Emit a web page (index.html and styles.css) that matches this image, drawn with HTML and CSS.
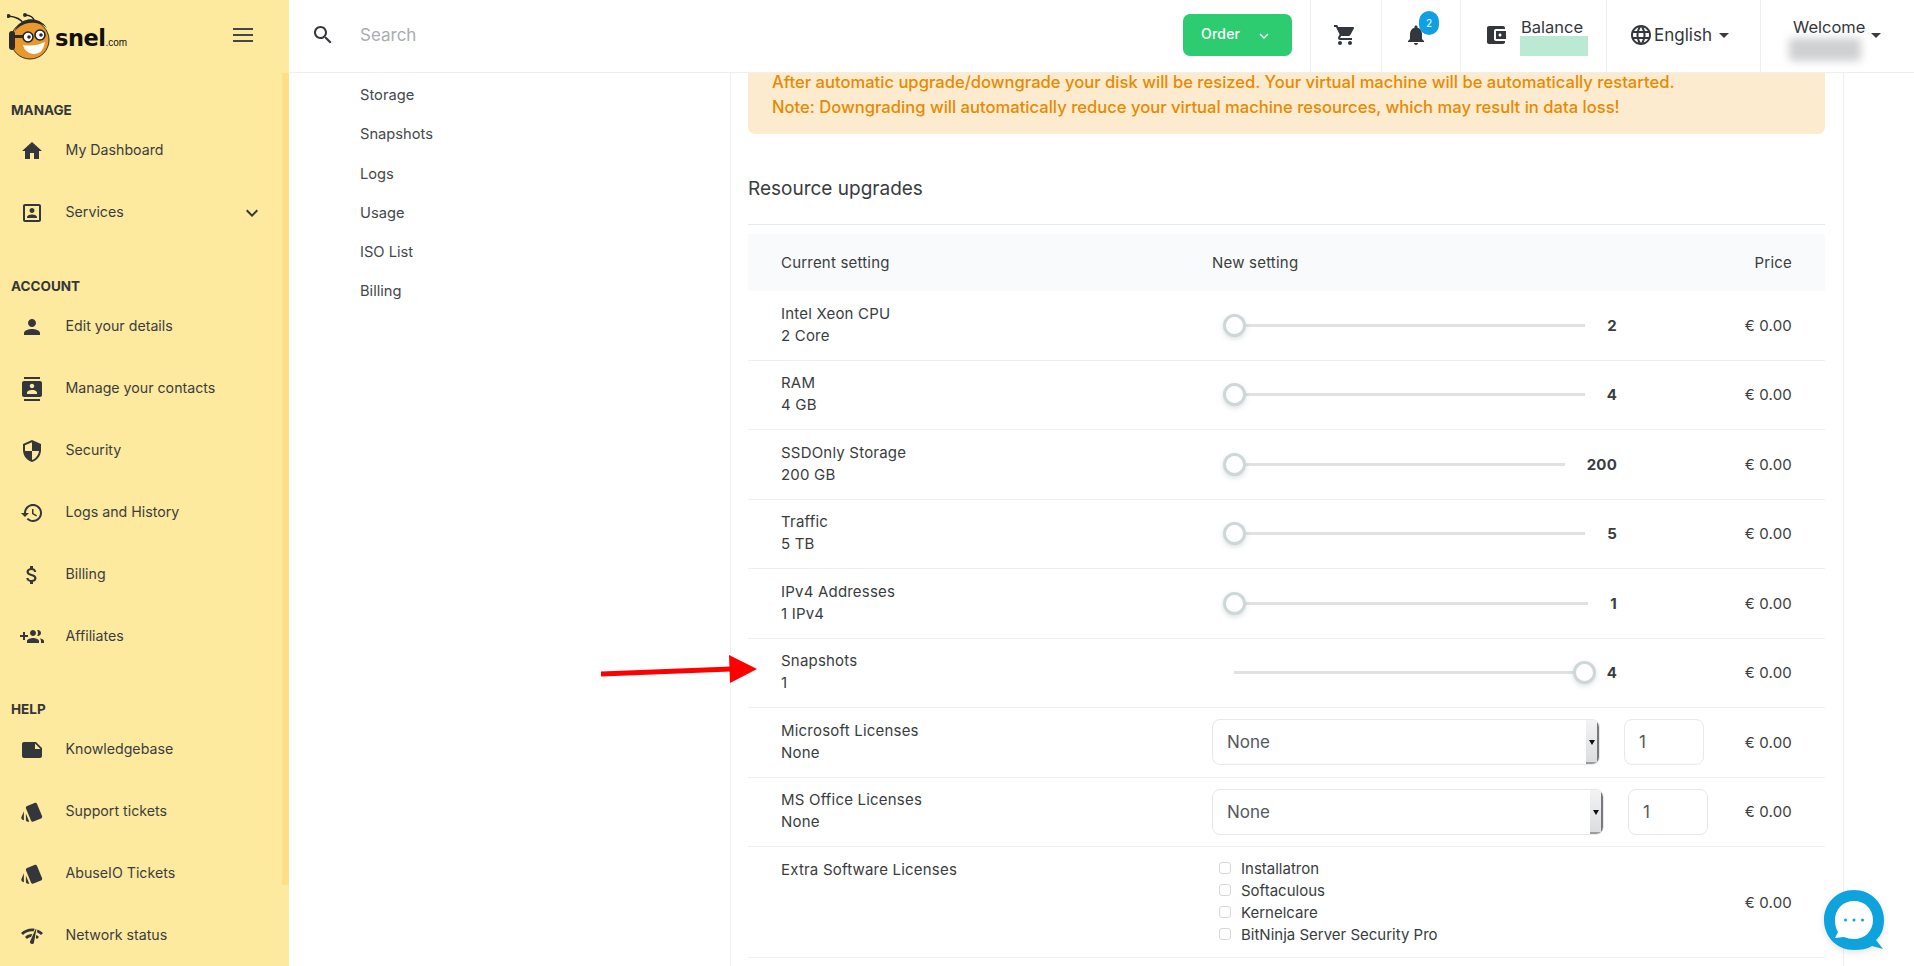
FILE: index.html
```html
<!DOCTYPE html>
<html lang="en">
<head>
<meta charset="utf-8">
<title>Snel.com</title>
<link rel="stylesheet" href="styles.css">
</head>
<body>
<svg class="defs" aria-hidden="true">
  <symbol id="i-home" viewBox="0 0 24 24"><path d="M10 20v-6h4v6h5v-8h3L12 3 2 12h3v8z"/></symbol>
  <symbol id="i-box" viewBox="0 0 24 24"><path d="M19 5v14H5V5h14m0-2H5c-1.11 0-2 .9-2 2v14c0 1.1.89 2 2 2h14c1.1 0 2-.9 2-2V5c0-1.1-.9-2-2-2z"/><path d="M12 12c1.4 0 2.5-1.1 2.5-2.5S13.4 7 12 7 9.5 8.1 9.5 9.5 10.6 12 12 12zm5 5v-1c0-1.7-3.3-2.5-5-2.5S7 14.3 7 16v1h10z"/></symbol>
  <symbol id="i-person" viewBox="0 0 24 24"><path d="M12 12c2.21 0 4-1.79 4-4s-1.79-4-4-4-4 1.79-4 4 1.79 4 4 4zm0 2c-2.67 0-8 1.34-8 4v2h16v-2c0-2.66-5.33-4-8-4z"/></symbol>
  <symbol id="i-contacts" viewBox="0 0 24 24"><path d="M20 0H4v2h16V0zM4 24h16v-2H4v2zM20 4H4c-1.1 0-2 .9-2 2v12c0 1.1.9 2 2 2h16c1.1 0 2-.9 2-2V6c0-1.1-.9-2-2-2zm-8 2.75c1.24 0 2.25 1.01 2.25 2.25s-1.01 2.25-2.25 2.25S9.75 10.24 9.75 9 10.76 6.75 12 6.75zM17 17H7v-1.5c0-1.67 3.33-2.5 5-2.5s5 .83 5 2.5V17z"/></symbol>
  <symbol id="i-shield" viewBox="0 0 24 24"><path d="M12 1L3 5v6c0 5.55 3.84 10.74 9 12 5.16-1.26 9-6.45 9-12V5l-9-4zm0 10.99h7c-.53 4.12-3.28 7.79-7 8.94V12H5V6.3l7-3.11v8.8z"/></symbol>
  <symbol id="i-history" viewBox="0 0 24 24"><path d="M13 3c-4.97 0-9 4.03-9 9H1l3.89 3.89.07.14L9 12H6c0-3.87 3.13-7 7-7s7 3.13 7 7-3.13 7-7 7c-1.93 0-3.68-.79-4.94-2.06l-1.42 1.42C8.27 19.99 10.51 21 13 21c4.97 0 9-4.03 9-9s-4.03-9-9-9zm-1 5v5l4.28 2.54.72-1.21-3.5-2.08V8H12z"/></symbol>
  <symbol id="i-money" viewBox="0 0 24 24"><path d="M11.8 10.9c-2.27-.59-3-1.2-3-2.15 0-1.09 1.01-1.85 2.7-1.85 1.78 0 2.44.85 2.5 2.1h2.21c-.07-1.72-1.12-3.3-3.21-3.81V3h-3v2.16c-1.94.42-3.5 1.68-3.5 3.61 0 2.31 1.91 3.46 4.7 4.13 2.5.6 3 1.48 3 2.41 0 .69-.49 1.79-2.7 1.79-2.06 0-2.87-.92-2.98-2.1h-2.2c.12 2.19 1.76 3.42 3.68 3.83V21h3v-2.15c1.95-.37 3.5-1.5 3.5-3.55 0-2.84-2.43-3.81-4.7-4.4z"/></symbol>
  <symbol id="i-group" viewBox="0 0 24 24"><path d="M8 10H5V7H3v3H0v2h3v3h2v-3h3v-2zm10 1c1.66 0 2.99-1.34 2.99-3S19.66 5 18 5c-.32 0-.63.05-.91.14.57.81.9 1.79.9 2.86s-.34 2.04-.9 2.86c.28.09.59.14.91.14zm-5 0c1.66 0 2.99-1.34 2.99-3S14.66 5 13 5s-3 1.34-3 3 1.34 3 3 3zm6.62 2.16c.83.73 1.38 1.66 1.38 2.84v2h3v-2c0-1.54-2.37-2.49-4.38-2.84zM13 13c-2 0-6 1-6 3v2h12v-2c0-2-4-3-6-3z"/></symbol>
  <symbol id="i-note" viewBox="0 0 24 24"><path d="M22 10l-6-6H4c-1.1 0-2 .9-2 2v12.01c0 1.1.9 1.99 2 1.99l16-.01c1.1 0 2-.89 2-1.99v-8zm-7-4.5l5.5 5.5H15V5.5z"/></symbol>
  <symbol id="i-style" viewBox="0 0 24 24"><path d="M2.53 19.65l1.34.56v-9.03l-2.43 5.86c-.41 1.02.08 2.19 1.09 2.61zm19.5-3.7L17.07 3.98c-.31-.75-1.04-1.21-1.81-1.23-.26 0-.53.04-.79.15L7.1 5.95c-.75.31-1.21 1.03-1.23 1.8-.01.27.04.54.15.8l4.96 11.97c.31.76 1.05 1.22 1.83 1.23.26 0 .52-.05.77-.15l7.36-3.05c1.02-.42 1.51-1.59 1.09-2.6zM5.88 19.75c0 1.1.9 2 2 2h1.45l-3.45-8.34v6.34z"/></symbol>
  <symbol id="i-network" viewBox="0 0 24 24"><path d="M15.9 5c-.17 0-.32.09-.41.23l-.07.15-5.18 11.65c-.16.29-.26.61-.26.96 0 1.11.9 2.01 2.01 2.01.96 0 1.77-.68 1.96-1.59l.01-.03L16.4 5.5c0-.28-.22-.5-.5-.5zM1 9l2 2c2.88-2.88 6.79-4.08 10.53-3.62l1.19-2.68C9.89 3.84 4.74 5.27 1 9zm20 2l2-2c-1.64-1.64-3.54-2.82-5.57-3.57l-.53 2.82c1.5.62 2.9 1.53 4.1 2.75zm-4 4l2-2c-.8-.8-1.7-1.42-2.66-1.89l-.55 2.92c.42.27.83.59 1.21.97zM5 13l2 2c1.13-1.13 2.56-1.79 4.03-2l1.28-2.88c-2.63-.08-5.3.87-7.31 2.88z"/></symbol>
  <symbol id="i-chev" viewBox="0 0 24 24"><path d="M7.41 8.59L12 13.17l4.59-4.58L18 10l-6 6-6-6z"/></symbol>
</svg>

<div class="app">
  <aside class="sidebar">
    <div class="brand">
      <svg class="bee" viewBox="0 0 50 50" aria-hidden="true">
        <path d="M17 12 Q13 5 1 4" class="bee-ant"/><path d="M28 10 Q26 3 18 3" class="bee-ant"/>
        <circle cx="1.500" cy="4" r="2" class="bee-dark"/><circle cx="18" cy="3" r="2" class="bee-dark"/>
        <circle cx="23" cy="28" r="19" class="bee-head"/>
        <path d="M7 21 A18 18 0 0 1 40 16 L36 13 A22 20 0 0 0 5 24 Z" class="bee-dark"/>
        <rect x="2" y="19" width="6" height="19" rx="3" class="bee-dark"/>
        <rect x="7" y="23" width="10" height="3" class="bee-dark"/>
        <circle cx="21" cy="25" r="5" class="bee-eye"/><circle cx="33" cy="23" r="5" class="bee-eye"/>
        <circle cx="22" cy="25" r="1.800" class="bee-dark"/><circle cx="34" cy="23" r="1.800" class="bee-dark"/>
        <path d="M16 33 Q28 35 38 30 Q36 43 26 42 Q18 41 16 33 Z" class="bee-smile"/>
      </svg>
      <div class="wordmark">snel<span class="wordmark-com">.com</span></div>
      <div class="burger"><span></span><span></span><span></span></div>
    </div>
    <nav class="menu">
      <h4 class="menu-title">MANAGE</h4>
      <a class="menu-item"><svg class="icon"><use href="#i-home"/></svg>My Dashboard</a>
      <a class="menu-item"><svg class="icon"><use href="#i-box"/></svg>Services<svg class="icon menu-chev"><use href="#i-chev"/></svg></a>
      <h4 class="menu-title menu-title-gap">ACCOUNT</h4>
      <a class="menu-item"><svg class="icon"><use href="#i-person"/></svg>Edit your details</a>
      <a class="menu-item"><svg class="icon"><use href="#i-contacts"/></svg>Manage your contacts</a>
      <a class="menu-item"><svg class="icon"><use href="#i-shield"/></svg>Security</a>
      <a class="menu-item"><svg class="icon"><use href="#i-history"/></svg>Logs and History</a>
      <a class="menu-item"><svg class="icon"><use href="#i-money"/></svg>Billing</a>
      <a class="menu-item"><svg class="icon"><use href="#i-group"/></svg>Affiliates</a>
      <h4 class="menu-title menu-title-gap">HELP</h4>
      <a class="menu-item"><svg class="icon"><use href="#i-note"/></svg>Knowledgebase</a>
      <a class="menu-item"><svg class="icon"><use href="#i-style"/></svg>Support tickets</a>
      <a class="menu-item"><svg class="icon"><use href="#i-style"/></svg>AbuseIO Tickets</a>
      <a class="menu-item"><svg class="icon"><use href="#i-network"/></svg>Network status</a>
    </nav>
    <div class="sidebar-scroll"></div>
  </aside>

  <div class="main">
    <header class="topbar">
      <div class="search">
        <svg class="icon" viewBox="0 0 24 24"><path d="M15.5 14h-.79l-.28-.27C15.41 12.59 16 11.11 16 9.5 16 5.91 13.09 3 9.5 3S3 5.91 3 9.5 5.91 16 9.5 16c1.61 0 3.09-.59 4.23-1.57l.27.28v.79l5 4.99L20.49 19l-4.99-5zm-6 0C7.01 14 5 11.99 5 9.5S7.01 5 9.5 5 14 7.01 14 9.5 11.99 14 9.5 14z"/></svg>
        <span class="search-text">Search</span>
      </div>
      <button class="order">Order<svg class="order-chev"><use href="#i-chev"/></svg></button>
      <div class="cell cell-cart">
        <svg class="icon" viewBox="0 0 24 24"><path d="M7 18c-1.100 0-1.990.9-1.990 2S5.900 22 7 22s2-.9 2-2-.9-2-2-2zM1 2v2h2l3.600 7.590-1.350 2.450c-.16.28-.25.61-.25.96 0 1.100.9 2 2 2h12v-2H7.420c-.14 0-.25-.11-.25-.25l.03-.12.9-1.630h7.450c.75 0 1.410-.41 1.750-1.030l3.580-6.490c.08-.14.12-.31.12-.48 0-.55-.45-1-1-1H5.210l-.94-2H1zm16 16c-1.100 0-1.990.9-1.990 2s.89 2 1.990 2 2-.9 2-2-.9-2-2-2z"/></svg>
      </div>
      <div class="cell cell-bell">
        <svg class="icon" viewBox="0 0 24 24"><path d="M12 22c1.100 0 2-.9 2-2h-4c0 1.100.89 2 2 2zm6-6v-5c0-3.070-1.640-5.640-4.500-6.320V4c0-.83-.67-1.500-1.500-1.500s-1.500.67-1.500 1.500v.68C7.630 5.360 6 7.920 6 11v5l-2 2v1h16v-1l-2-2z"/></svg>
        <span class="badge">2</span>
      </div>
      <div class="cell cell-balance">
        <svg class="icon" viewBox="0 0 24 24"><path d="M21 18v1c0 1.100-.9 2-2 2H5c-1.110 0-2-.9-2-2V5c0-1.100.89-2 2-2h14c1.100 0 2 .9 2 2v1h-9c-1.110 0-2 .9-2 2v8c0 1.100.89 2 2 2h9zm-9-2h10V8H12v8zm4-2.500c-.83 0-1.500-.67-1.500-1.500s.67-1.500 1.500-1.500 1.500.67 1.500 1.500-.67 1.500-1.500 1.500z"/></svg>
        <div class="stack">
          <span class="stack-label">Balance</span>
          <span class="redact-green"></span>
        </div>
      </div>
      <div class="cell cell-lang">
        <svg class="icon" viewBox="0 0 24 24"><path d="M11.990 2C6.470 2 2 6.480 2 12s4.470 10 9.990 10C17.520 22 22 17.520 22 12S17.520 2 11.990 2zm6.930 6h-2.950c-.32-1.250-.78-2.450-1.380-3.560 1.840.63 3.370 1.910 4.330 3.560zM12 4.040c.83 1.200 1.480 2.530 1.910 3.960h-3.820c.43-1.430 1.080-2.760 1.910-3.960zM4.260 14C4.100 13.360 4 12.690 4 12s.1-1.360.26-2h3.380c-.08.66-.14 1.320-.14 2 0 .68.06 1.340.14 2H4.260zm.82 2h2.950c.32 1.250.78 2.450 1.380 3.560-1.840-.63-3.370-1.900-4.330-3.560zm2.950-8H5.080c.96-1.660 2.490-2.930 4.330-3.560C8.810 5.550 8.350 6.750 8.030 8zM12 19.960c-.83-1.200-1.480-2.530-1.910-3.960h3.820c-.43 1.430-1.080 2.760-1.910 3.960zM14.340 14H9.660c-.09-.66-.16-1.320-.16-2 0-.68.07-1.350.16-2h4.680c.09.65.16 1.320.16 2 0 .68-.07 1.340-.16 2zm.25 5.560c.6-1.110 1.060-2.310 1.380-3.560h2.950c-.96 1.650-2.490 2.930-4.330 3.560zM16.360 14c.08-.66.14-1.320.14-2 0-.68-.06-1.340-.14-2h3.380c.16.64.26 1.310.26 2s-.1 1.360-.26 2h-3.380z"/></svg>
        <span class="lang-text">English</span>
        <span class="caret"></span>
      </div>
      <div class="cell cell-user">
        <div class="stack stack-user">
          <span class="stack-label">Welcome</span>
          <span class="redact-grey"></span>
        </div>
        <span class="caret"></span>
      </div>
    </header>

    <div class="content">
      <ul class="subnav">
        <li>Storage</li>
        <li>Snapshots</li>
        <li>Logs</li>
        <li>Usage</li>
        <li>ISO List</li>
        <li>Billing</li>
      </ul>

      <section class="panel">
        <div class="alert">
          <p>After automatic upgrade/downgrade your disk will be resized. Your virtual machine will be automatically restarted.</p>
          <p>Note: Downgrading will automatically reduce your virtual machine resources, which may result in data loss!</p>
        </div>
        <h3 class="section-title">Resource upgrades</h3>

        <div class="table">
          <div class="row row-head">
            <div>Current setting</div>
            <div>New setting</div>
            <div class="price">Price</div>
          </div>

          <div class="row">
            <div class="name"><div>Intel Xeon CPU</div><div>2 Core</div></div>
            <div class="slider"><div class="track"><i class="thumb"></i></div><b class="value">2</b></div>
            <div class="price">€ 0.00</div>
          </div>
          <div class="row">
            <div class="name"><div>RAM</div><div>4 GB</div></div>
            <div class="slider"><div class="track"><i class="thumb"></i></div><b class="value">4</b></div>
            <div class="price">€ 0.00</div>
          </div>
          <div class="row">
            <div class="name"><div>SSDOnly Storage</div><div>200 GB</div></div>
            <div class="slider"><div class="track"><i class="thumb"></i></div><b class="value">200</b></div>
            <div class="price">€ 0.00</div>
          </div>
          <div class="row">
            <div class="name"><div>Traffic</div><div>5 TB</div></div>
            <div class="slider"><div class="track"><i class="thumb"></i></div><b class="value">5</b></div>
            <div class="price">€ 0.00</div>
          </div>
          <div class="row">
            <div class="name"><div>IPv4 Addresses</div><div>1 IPv4</div></div>
            <div class="slider"><div class="track"><i class="thumb"></i></div><b class="value">1</b></div>
            <div class="price">€ 0.00</div>
          </div>
          <div class="row">
            <div class="name"><div>Snapshots</div><div>1</div></div>
            <div class="slider slider-max"><div class="track"><i class="thumb"></i></div><b class="value">4</b></div>
            <div class="price">€ 0.00</div>
          </div>
          <div class="row">
            <div class="name"><div>Microsoft Licenses</div><div>None</div></div>
            <div class="license"><div class="select">None<span class="select-cap"></span></div><div class="qty">1</div></div>
            <div class="price">€ 0.00</div>
          </div>
          <div class="row">
            <div class="name"><div>MS Office Licenses</div><div>None</div></div>
            <div class="license license-wide"><div class="select">None<span class="select-cap"></span></div><div class="qty">1</div></div>
            <div class="price">€ 0.00</div>
          </div>
          <div class="row row-tall">
            <div class="name"><div>Extra Software Licenses</div></div>
            <ul class="checks">
              <li><span class="check"></span>Installatron</li>
              <li><span class="check"></span>Softaculous</li>
              <li><span class="check"></span>Kernelcare</li>
              <li><span class="check"></span>BitNinja Server Security Pro</li>
            </ul>
            <div class="price">€ 0.00</div>
          </div>
        </div>
      </section>
    </div>
  </div>
</div>

<svg class="arrow" viewBox="0 0 160 30" aria-hidden="true">
  <path d="M2 19 L132 14" class="arrow-line"/>
  <path d="M130 0 L158 14 L131 28 Z" class="arrow-head"/>
</svg>

<svg class="chat" viewBox="0 0 62 62" aria-hidden="true">
  <path d="M31 1 C48 1 61 14 61 31 C61 40 58 47 53 51 L60 60 L49 57 C44 60 38 61 31 61 C14 61 1 48 1 31 C1 14 14 1 31 1 Z" class="chat-ring"/>
  <path d="M31 12 C42 12 50 20 50 31 C50 42 42 50 31 50 C27 50 24 49 21 48 L12 49 L15 43 C13 40 12 36 12 31 C12 20 20 12 31 12 Z" class="chat-in"/>
  <circle cx="22.500" cy="31" r="1.500" class="chat-dot"/><circle cx="31" cy="31" r="1.500" class="chat-dot"/><circle cx="39.500" cy="31" r="1.500" class="chat-dot"/>
</svg>
</body>
</html>
```

FILE: styles.css
```css
* { box-sizing: border-box; }

html, body {
  margin: 0;
  height: 966px;
  overflow: hidden;
}

body {
  position: relative;
  font-family: Inter, "Liberation Sans", sans-serif;
  font-size: 14px;
  color: #3a3d40;
  background: #fff;
}

.defs { position: absolute; width: 0; height: 0; }

.icon { width: 24px; height: 24px; fill: #33363a; flex: none; }

.app { display: flex; height: 966px; }

/* Sidebar */
.sidebar {
  position: relative;
  width: 289px;
  flex: none;
  background: #feea9f;
}

.sidebar-scroll {
  position: absolute;
  top: 73px;
  right: 0;
  width: 7px;
  height: 812px;
  background: #ffdf85;
}

.brand {
  position: relative;
  display: flex;
  align-items: flex-start;
  height: 72px;
  padding: 12px 0 0 7px;
}

.bee { width: 50px; height: 50px; flex: none; }
.bee-ant { fill: none; stroke: #222; stroke-width: 1.4; }
.bee-dark { fill: #2b2b2b; }
.bee-head { fill: #e9982d; stroke: #2f2f2f; stroke-width: 1; }
.bee-eye { fill: #fff; stroke: #222; stroke-width: 1.6; }
.bee-smile { fill: #fff; }

.wordmark {
  margin: 12px 0 0 -2px;
  font-family: "DejaVu Sans", sans-serif;
  font-size: 22.500px;
  font-weight: 700;
  line-height: 28px;
  letter-spacing: -0.5px;
  color: #111;
}

.wordmark-com {
  font-family: "Liberation Sans", sans-serif;
  font-size: 10px;
  font-weight: 400;
  letter-spacing: 0;
}

.burger {
  position: absolute;
  top: 28px;
  left: 233px;
  display: flex;
  flex-direction: column;
  gap: 4px;
  width: 20px;
}

.burger span { height: 2px; background: #45464a; }

.menu { padding-top: 28px; }

.menu-title {
  margin: 0;
  padding-left: 11px;
  font-size: 13.500px;
  font-weight: 700;
  line-height: 20px;
  height: 19px;
  color: #33363a;
}

.menu-title-gap { margin-top: 32.500px; }

.menu-item {
  display: flex;
  align-items: center;
  gap: 21.500px;
  height: 62px;
  padding-left: 20px;
  color: #3a3d40;
  font-size: 14.200px;
  line-height: 20px;
}

.menu-item .icon { position: relative; top: 1px; }

.menu-chev { margin-left: auto; margin-right: 25px; }

/* Top bar */
.main { flex: 1; min-width: 0; display: flex; flex-direction: column; }

.topbar {
  position: relative;
  z-index: 2;
  display: flex;
  align-items: stretch;
  height: 73px;
  flex: none;
  background: #fff;
  border-bottom: 1px solid #eeeff1;
}

.search {
  display: flex;
  align-items: center;
  flex: 1;
  gap: 25px;
  padding: 0 0 2px 22px;
}

.search-text { font-size: 17px; color: #a9acaf; }

.order {
  display: flex;
  align-items: center;
  align-self: flex-start;
  width: 109px;
  height: 42px;
  margin: 14px 18px 0 0;
  padding: 0 0 4px 18px;
  border: 0;
  border-radius: 7px;
  background: #2ecc71;
  color: #fff;
  font: 500 14px Inter, sans-serif;
  letter-spacing: 0.2px;
}

.order-chev { position: relative; top: 3px; width: 18px; height: 18px; margin-left: 15px; fill: #fff; }

.cell {
  position: relative;
  display: flex;
  align-items: center;
  padding-bottom: 2px;
  border-left: 1px solid #eeeff1;
}

.cell-cart { width: 71px; padding-left: 22px; }
.cell-bell { width: 79px; padding-left: 22px; }
.cell-balance { width: 146px; padding-left: 23px; gap: 13px; }
.cell-lang { width: 154px; padding-left: 22px; gap: 1px; }
.cell-user { width: 154px; padding-left: 25px; }

.badge {
  position: absolute;
  top: 11px;
  left: 37px;
  width: 20px;
  height: 24px;
  border-radius: 10px;
  background: #0f9fe3;
  color: #fff;
  font-size: 10px;
  line-height: 24px;
  text-align: center;
}

.stack { display: flex; flex-direction: column; align-self: flex-start; padding-top: 17px; }
.stack-label { font-size: 16.500px; line-height: 20px; color: #33363a; }
.stack-user { padding-left: 7px; }

.redact-green {
  display: block;
  width: 68px;
  height: 20px;
  margin: -1px 0 0 -1px;
  background: #bce9d3;
}

.redact-grey {
  display: block;
  width: 72px;
  height: 23px;
  margin: 1px 0 0 -4px;
  border-radius: 3px;
  background: #cfd0d2;
  filter: blur(4px);
}

.lang-text { font-size: 17px; color: #33363a; }

.caret {
  width: 0;
  height: 0;
  border-left: 5px solid transparent;
  border-right: 5px solid transparent;
  border-top: 5px solid #3a3d40;
}

.cell-lang .caret { margin-left: 6px; }
.cell-user .caret { margin: 0 0 0 6px; }

/* Content */
.content { display: flex; flex: 1; min-height: 0; }

.subnav {
  width: 442px;
  flex: none;
  margin: 0;
  padding: 3px 0 0 71px;
  list-style: none;
  border-right: 1px solid #eeeff1;
}

.subnav li { font-size: 14.700px; line-height: 39.300px; color: #45484b; }

.panel {
  width: 1113px;
  flex: none;
  padding: 0 18px 0 17px;
  border-right: 1px solid #eeeff1;
}

.alert {
  height: 61px;
  padding: 0 24px;
  border-radius: 0 0 7px 7px;
  background: #fdebd0;
  color: #e68a00;
  font-size: 16.600px;
  font-weight: 500;
  line-height: 25px;
}

.alert p { margin: 0; position: relative; top: -3px; }

.section-title {
  height: 91px;
  margin: 0 0 9px;
  padding-top: 42px;
  border-bottom: 1px solid #e7e8ea;
  font-size: 19px;
  font-weight: 400;
  line-height: 26px;
  color: #3a3d40;
}

.table { font-size: 15px; letter-spacing: 0.2px; }

.row {
  display: grid;
  grid-template-columns: 431px 1fr auto;
  align-items: center;
  height: 69.500px;
  padding: 0 33px;
  border-bottom: 1px solid #eeeff1;
}

.row-head {
  height: 57px;
  border-bottom: 0;
  background: #f9fafc;
}

.row-tall { height: 111px; }

.name { align-self: start; padding-top: 11.500px; line-height: 22px; }

.price { justify-self: end; min-width: 0; }

/* Sliders */
.slider { display: flex; align-items: center; gap: 22px; width: 405px; padding-left: 22px; }

.track { position: relative; flex: 1; height: 3px; background: #dfe1e2; }

.thumb {
  position: absolute;
  top: 50%;
  left: 0;
  width: 23px;
  height: 23px;
  margin: -11.500px 0 0 -11.500px;
  border: 3px solid #cfd6d8;
  border-radius: 50%;
  background: #fff;
  box-shadow: 0 2px 5px rgba(120, 135, 140, 0.25);
}

.slider-max .thumb { left: 100%; }

.value { font-weight: 700; }

/* Licenses */
.license { display: flex; gap: 24px; width: 492px; }
.license-wide { width: 496px; }

.select {
  position: relative;
  flex: 1;
  height: 46px;
  padding-left: 14px;
  border: 1px solid #e6e8ea;
  border-radius: 8px;
  font-size: 17px;
  letter-spacing: 0;
  line-height: 44px;
  color: #55585b;
  overflow: hidden;
}

.select-cap {
  position: absolute;
  top: 0;
  right: 0;
  width: 13px;
  height: 100%;
  border-right: 2px solid #77797c;
  border-bottom: 2px solid #9a9c9f;
  background: linear-gradient(#f3f3f4, #dcdde0);
}

.select-cap::after {
  content: "";
  position: absolute;
  top: 20px;
  left: 3px;
  border-left: 3.500px solid transparent;
  border-right: 3.500px solid transparent;
  border-top: 5px solid #111;
}

.qty {
  width: 80px;
  height: 46px;
  padding-left: 14px;
  border: 1px solid #e6e8ea;
  border-radius: 8px;
  font-size: 17px;
  line-height: 44px;
  color: #55585b;
}

/* Checkboxes */
.checks { margin: 0; padding: 0 0 2px 7px; list-style: none; letter-spacing: 0; }
.checks li { display: flex; align-items: center; gap: 10px; height: 22px; }

.check {
  width: 12px;
  height: 12px;
  border: 1px solid #d5d7da;
  border-radius: 3px;
  background: #fff;
}

/* Overlays */
.arrow {
  position: absolute;
  top: 655px;
  left: 599px;
  width: 160px;
  height: 30px;
}

.arrow-line { fill: none; stroke: #fe0000; stroke-width: 5; }
.arrow-head { fill: #fe0000; }

.chat {
  position: absolute;
  top: 889px;
  left: 1823px;
  width: 62px;
  height: 62px;
  filter: drop-shadow(0 2px 3px rgba(0, 0, 0, 0.12));
}

.chat-ring { fill: #0ea3dd; }
.chat-in { fill: #fff; }
.chat-dot { fill: #0ea3dd; }
```
